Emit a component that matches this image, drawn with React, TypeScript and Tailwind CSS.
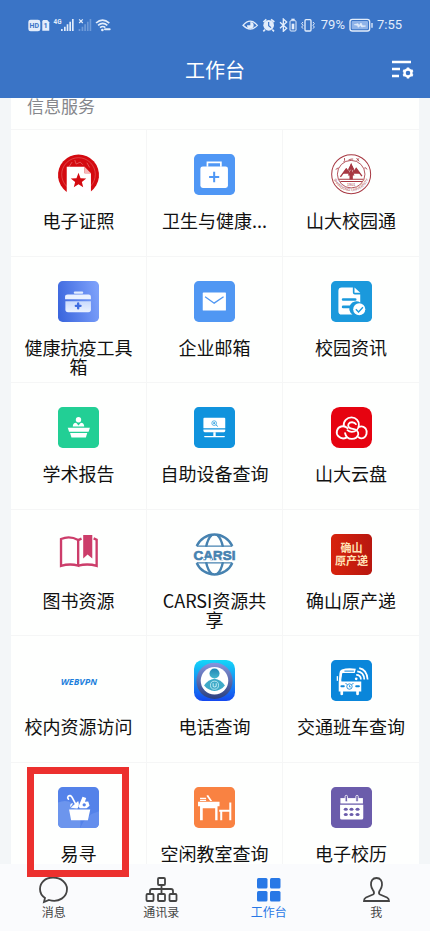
import type { ReactNode } from "react";

const CJK = "font-['Noto_Sans_CJK_SC','Noto_Sans',sans-serif]";

const Tile = ({ fill, r = 14, children }: { fill: string; r?: number; children: ReactNode }) => (
  <>
    <rect width="122" height="122" rx={r} fill={fill} />
    {children}
  </>
);

const CertificateIcon = () => (
  <>
    <path d="M25 112 A61 61 0 1 1 97 112 Z" fill="#d40a10" />
    <circle cx="61" cy="61" r="50" fill="none" stroke="#e87878" strokeWidth="1.500" />
    <path d="M30 42 L42 24 M50 18 L54 30 L66 24 L74 32 M86 26 L94 40" fill="none" stroke="#e87878" strokeWidth="2" />
    <path d="M26 38 H79 V57 H98 V122 H26 Z" fill="#fff" />
    <path d="M79 38 L98 57 H79 Z" fill="#f6b9b9" />
    <path d="M61 56 L67 72 L84 73 L71 83 L75 99 L61 90 L47 99 L51 83 L38 73 L55 72 Z" fill="#d40a10" />
  </>
);

const MedicalIcon = () => (
  <Tile fill="#4f97f5">
    <path d="M40 38 V25 H80 V38" fill="none" stroke="#fff" strokeWidth="5" />
    <rect x="19" y="37" width="82" height="64" rx="7" fill="#fff" />
    <path d="M60 53 V84 M45 68.500 H75" stroke="#4f97f5" strokeWidth="6" />
  </Tile>
);

const SealIcon = () => (
  <>
    <g fill="none" stroke="#a73842">
      <circle cx="60" cy="60" r="58" strokeWidth="3" />
      <circle cx="60" cy="60" r="41" strokeWidth="2.500" />
      <path d="M40 12 Q42 20 38 24 M52 18 Q60 14 66 15 M76 20 L84 13 M76 12 L84 22 M14 46 L22 41 M99 42 Q104 38 107 46" strokeWidth="2.500" />
      <path d="M23 75 H97 M28 82 H92" strokeWidth="3" />
      <path d="M28 68 L45 45 L52 54 L60 32 L68 54 L75 43 L92 66" strokeWidth="4" />
    </g>
    <path d="M60 28 L70 47 H50 Z M46 42 L57 59 H34 Z M75 42 L88 59 H64 Z M60 44 L70 64 H50 Z M55 62 H65 V76 H55 Z" fill="#a73842" />
    <path id="seal-arc" d="M6 66 A55 55 0 0 0 114 66" fill="none" />
    <text fontSize="11" fill="#a73842" fontFamily="Liberation Sans, sans-serif">
      <textPath href="#seal-arc" startOffset="50%" textAnchor="middle">SHANDONG UNIVERSITY</textPath>
    </text>
    <text x="60" y="94" fontSize="11" textAnchor="middle" fill="#a73842" fontFamily="Liberation Sans, sans-serif">1901</text>
  </>
);

const ToolkitIcon = () => (
  <Tile fill="url(#toolkit)">
    <defs>
      <linearGradient id="toolkit" x1="0" y1="0.600" x2="1" y2="0.400">
        <stop offset="0" stopColor="#3c67de" />
        <stop offset="1" stopColor="#7ca0fa" />
      </linearGradient>
      <linearGradient id="toolkit-bag" x1="0" y1="0" x2="0" y2="1">
        <stop offset="0" stopColor="#c9dafc" />
        <stop offset="1" stopColor="#ecf3ff" />
      </linearGradient>
    </defs>
    <rect x="47" y="31" width="28" height="7" rx="3" fill="#e3edff" />
    <path d="M21 54 V47 Q21 40 29 40 H91 Q98 40 98 47 V54 Z" fill="#eaf1ff" />
    <path d="M22 60 H98 V85 Q98 93 90 93 H30 Q22 93 22 85 Z" fill="url(#toolkit-bag)" />
    <path d="M60 67 V81 M53 74 H67" stroke="#3f6de0" strokeWidth="7" strokeLinecap="round" />
  </Tile>
);

const MailIcon = () => (
  <Tile fill="#5097f3">
    <rect x="26" y="34" width="69" height="54" rx="2" fill="#fff" />
    <path d="M33 47 L60 66 L88 47" fill="none" stroke="#5097f3" strokeWidth="4" />
  </Tile>
);

const NewsIcon = () => (
  <Tile fill="#1b99dc">
    <path d="M32 19 H65 V34 Q65 40 71 40 H87 V64 A20 20 0 0 0 64 100 H32 Q22 100 22 90 V29 Q22 19 32 19 Z" fill="#fff" />
    <path d="M70 19 L87 35 H70 Z" fill="#fff" />
    <path d="M36 55 H72 M36 77 H60" stroke="#1b99dc" strokeWidth="8" strokeLinecap="round" />
    <circle cx="84" cy="84" r="18" fill="#fff" />
    <path d="M74 84 L82 92 L95 78" fill="none" stroke="#1b99dc" strokeWidth="4" />
  </Tile>
);

const LectureIcon = () => (
  <Tile fill="#22cf95">
    <circle cx="61" cy="38" r="8" fill="#fff" />
    <path d="M44 58 Q44 48 54 47 L61 55 L68 47 Q78 48 78 58 Z" fill="#fff" />
    <path d="M29 62 H95 L91 74 H33 Z" fill="#fff" />
    <path d="M36 77 H87 L83 91 H40 Z" fill="#fff" />
  </Tile>
);

const DeviceIcon = () => (
  <Tile fill="#1093dd">
    <path d="M31 32 H90 Q93 32 93 35 V63 H28 V35 Q28 32 31 32 Z" fill="#fff" />
    <path d="M28 67 H93 V71 Q93 75 89 75 H32 Q28 75 28 71 Z" fill="#fff" />
    <path d="M61 75 V87" stroke="#fff" strokeWidth="7" />
    <path d="M32 88 H90" stroke="#fff" strokeWidth="4" strokeLinecap="round" />
    <circle cx="60" cy="48" r="7" fill="none" stroke="#1093dd" strokeWidth="2" />
    <path d="M57 48 H63 M60 45 V51 M65 53 L71 58" stroke="#1093dd" strokeWidth="2.500" />
  </Tile>
);

const CloudIcon = () => (
  <Tile fill="#e60310" r={26}>
    <g fill="none" stroke="#fff" strokeWidth="5.500" strokeLinecap="round">
      <path d="M46 91 C38 95 28 93 22 87 C13 78 17 62 30 58 C37 56 45 59 49 63" />
      <path d="M84 59 C92 56 98 59 103 64 C110 74 105 88 97 92 C92 94 86 93 82 90" />
      <path d="M38 57 C36 41 48 31 61 31 C75 31 84 42 83 54 C82 66 73 74 62 74 C56 74 52 72 49 69" />
      <path d="M74 51 C70 44 56 43 52 51 C48 60 56 64 65 65 C76 67 82 74 81 81 C79 90 71 95 62 95 C52 95 44 88 42 78" />
    </g>
  </Tile>
);

const BookIcon = () => (
  <>
    <g fill="none" stroke="#cc3d6a" strokeWidth="7">
      <path d="M60 18 Q35 4 9 15 V95 Q35 87 60 94 Z" />
      <path d="M60 94 Q90 87 115 95 V17 L106 13 M60 18 L70 14" />
    </g>
    <path d="M75 3 H102 V73 L88 61 L75 73 Z" fill="#cc3d6a" />
  </>
);

const CarsiIcon = () => (
  <>
    <g fill="none" stroke="#4682b0" strokeWidth="7">
      <path d="M8 36 A58 58 0 0 1 114 36 M8 86 A58 58 0 0 0 114 86" />
      <path d="M36 38 Q41 14 52 4 M86 38 Q81 14 70 4 M36 84 Q41 108 52 118 M86 84 Q81 108 70 118" />
      <path d="M8 36 H114 M8 86 H114" strokeWidth="4" />
    </g>
    <text x="61" y="76" fontSize="40" fontWeight="700" textAnchor="middle" fill="#4682b0" stroke="#4682b0" strokeWidth="2" fontFamily="Liberation Sans, sans-serif">CARSI</text>
    <g fill="#fff">
      <circle cx="31" cy="73" r="2.500" />
      <circle cx="51" cy="75" r="2.500" />
      <circle cx="66" cy="70" r="2.500" />
      <circle cx="84" cy="75" r="2.500" />
    </g>
  </>
);

const QueshanIcon = () => (
  <Tile fill="url(#queshan)">
    <defs>
      <linearGradient id="queshan" x1="0" y1="0" x2="1" y2="0">
        <stop offset="0" stopColor="#d7230d" />
        <stop offset="1" stopColor="#b8170f" />
      </linearGradient>
    </defs>
    <g fontSize="33" fontWeight="700" textAnchor="middle" fill="#ffe2b6" fontFamily="Noto Sans CJK SC, sans-serif">
      <text x="61" y="53">确山</text>
      <text x="61" y="93">原产递</text>
    </g>
  </Tile>
);

const WebvpnIcon = () => (
  <text x="62" y="73" fontSize="27" fontWeight="700" fontStyle="italic" textAnchor="middle" fill="#1d7fdc" fontFamily="Open Sans, sans-serif">
    WEBVPN
  </text>
);

const ContactIcon = () => (
  <Tile fill="url(#contact)" r={26}>
    <defs>
      <linearGradient id="contact" x1="0" y1="0" x2="0" y2="1">
        <stop offset="0" stopColor="#14d7f8" />
        <stop offset="1" stopColor="#1548ef" />
      </linearGradient>
      <linearGradient id="contact-ring" x1="0" y1="0" x2="0" y2="1">
        <stop offset="0" stopColor="#8795dd" />
        <stop offset="1" stopColor="#2b407f" />
      </linearGradient>
      <linearGradient id="contact-man" x1="0" y1="0" x2="0" y2="1">
        <stop offset="0" stopColor="#2385b4" />
        <stop offset="1" stopColor="#44b7cf" />
      </linearGradient>
    </defs>
    <circle cx="61" cy="62" r="54" fill="url(#contact-ring)" />
    <circle cx="61" cy="62" r="41" fill="#fff" />
    <circle cx="61" cy="40" r="15" fill="url(#contact-man)" />
    <path d="M30 76 Q42 58 61 56 Q80 58 92 76 Q80 91 61 92 Q42 91 30 76 Z" fill="#3eaac8" />
    <circle cx="61" cy="75" r="12" fill="none" stroke="#c7edf5" strokeWidth="2.500" />
    <path d="M57 69 V78 Q61 83 66 78 V69" fill="none" stroke="#c7edf5" strokeWidth="3" />
  </Tile>
);

const BusIcon = () => (
  <Tile fill="#0a86da">
    <path d="M74 26 Q50 22 32 28 Q25 31 25 40 L23 66 V94 H28 V103 Q32 107 36 103 V94 H75 V103 Q79 107 83 103 V94 H90 V64 H31 L33 41 H70" fill="#fff" />
    <path d="M34 39 H78 L84 62 H31 Z" fill="#0a86da" />
    <path d="M40 33 H68" stroke="#0a86da" strokeWidth="3" />
    <path d="M19 48 V62" stroke="#fff" strokeWidth="4" />
    <path d="M31 78 H38 M75 78 H83" stroke="#0a86da" strokeWidth="6" strokeLinecap="round" />
    <circle cx="55" cy="79" r="8" fill="none" stroke="#0a86da" strokeWidth="2.500" />
    <path d="M43 70 L48 72 M67 70 L62 72 M55 75 V80 H59" fill="none" stroke="#0a86da" strokeWidth="2.500" />
    <circle cx="75" cy="56" r="4" fill="#fff" />
    <path d="M75 44 Q89 44 89 58 M78 34 Q98 36 99 58 M84 24 Q107 28 109 58" fill="none" stroke="#fff" strokeWidth="5" />
  </Tile>
);

const BasketIcon = () => (
  <Tile fill="#5482e9">
    <path d="M0 46 Q24 36 42 48 Q72 72 66 122 H14 Q0 122 0 108 Z" fill="#6c95ed" />
    <path d="M66 122 Q82 82 122 72 V108 Q122 122 108 122 Z" fill="#648eed" />
    <path d="M33 67 H96 L89 99 H39 Z" fill="#fff" />
    <path d="M38 62 L60 42 Q65 54 58 64 Z M37 60 Q34 48 45 48" fill="#fff" />
    <path d="M53 52 L42 31 Q37 22 30 28 Q27 32 31 36" fill="none" stroke="#fff" strokeWidth="5" strokeLinecap="round" />
    <path d="M61 58 L73 29 L84 33 L80 44 L90 43 L94 56 L85 63 H65 Z" fill="#fff" />
    <circle cx="78" cy="53" r="5" fill="#5482e9" />
  </Tile>
);

const DeskIcon = () => (
  <Tile fill="#f98242">
    <path d="M12 44 H76 V57 H70 V99 H63 V63 H26 V99 H18 V57 H12 Z" fill="#fff" />
    <path d="M18 32 H36 V36 H18 Z M18 38 H36 V42 H18 Z M37 26 L42 24 L54 42 H48 Z" fill="#fff" />
    <path d="M108 46 V99 M108 71 H75 M81 71 V99" fill="none" stroke="#fff" strokeWidth="6" />
  </Tile>
);

const CalendarIcon = () => (
  <Tile fill="#6b5cab">
    <path d="M28 33 H95 V49 H28 Z" fill="#fff" />
    <path d="M27 53 H96 V92 Q96 97 91 97 H32 Q27 97 27 92 Z" fill="#fff" />
    <g fill="#6b5cab" stroke="#fff" strokeWidth="2.500">
      <rect x="42" y="25" width="7" height="19" rx="3" />
      <rect x="74" y="25" width="7" height="19" rx="3" />
    </g>
    <g fill="#6b5cab">
      {[44, 61, 79].map((cx) => (
        <g key={cx}>
          <ellipse cx={cx} cy="66" rx="6" ry="4.500" />
          <ellipse cx={cx} cy="82" rx="6" ry="4.500" />
        </g>
      ))}
    </g>
  </Tile>
);

type App = { name: string; icon: ReactNode; marked?: boolean };

const apps: App[] = [
  { name: "电子证照", icon: <CertificateIcon /> },
  { name: "卫生与健康...", icon: <MedicalIcon /> },
  { name: "山大校园通", icon: <SealIcon /> },
  { name: "健康抗疫工具箱", icon: <ToolkitIcon /> },
  { name: "企业邮箱", icon: <MailIcon /> },
  { name: "校园资讯", icon: <NewsIcon /> },
  { name: "学术报告", icon: <LectureIcon /> },
  { name: "自助设备查询", icon: <DeviceIcon /> },
  { name: "山大云盘", icon: <CloudIcon /> },
  { name: "图书资源", icon: <BookIcon /> },
  { name: "CARSI资源共享", icon: <CarsiIcon /> },
  { name: "确山原产递", icon: <QueshanIcon /> },
  { name: "校内资源访问", icon: <WebvpnIcon /> },
  { name: "电话查询", icon: <ContactIcon /> },
  { name: "交通班车查询", icon: <BusIcon /> },
  { name: "易寻", icon: <BasketIcon />, marked: true },
  { name: "空闲教室查询", icon: <DeskIcon /> },
  { name: "电子校历", icon: <CalendarIcon /> },
];

const AppCell = ({ name, icon, marked }: App) => (
  <button
    type="button"
    className="relative flex flex-col items-center gap-4 border-t border-r border-[#f5f6f6] px-3 pt-6 nth-[3n]:border-r-0"
  >
    <svg viewBox="0 0 122 122" className="size-[41px] shrink-0 overflow-visible" aria-hidden="true">
      {icon}
    </svg>
    <span className="text-center text-[18px] leading-[19px] text-[#111]">{name}</span>
    {marked && <span className="absolute top-1 left-4 z-20 h-[110px] w-[102px] border-[7px] border-[#ec302e]" />}
  </button>
);

const StatusBar = () => (
  <div className="flex h-[50px] items-center justify-between px-7 text-[#e3edfb]">
    <svg viewBox="0 0 250 42" className="h-[14px] w-[83px]" fill="none" aria-label="HD 4G">
      <rect x="1" y="5" width="36" height="35" rx="7" fill="currentColor" />
      <text x="19" y="30" fontSize="21" fontWeight="700" textAnchor="middle" fill="#3a74c6" fontFamily="Roboto, sans-serif">HD</text>
      <path d="M46 6 H58 L64 13 V38 H43 V9 Z" fill="currentColor" />
      <text x="53" y="31" fontSize="22" fontWeight="700" textAnchor="middle" fill="#3a74c6" fontFamily="Roboto, sans-serif">1</text>
      <text x="77" y="19" fontSize="19" fontWeight="700" fill="currentColor" fontFamily="Roboto, sans-serif">4G</text>
      <path d="M102 39 V33 M111 39 V26 M119 39 V19 M127 39 V11 M135 39 V3" stroke="currentColor" strokeWidth="5" />
      <path d="M154 4 L165 15 M165 4 L154 15" stroke="currentColor" strokeWidth="3.500" />
      <path d="M155 39 V33 M164 39 V26 M172 39 V19 M180 39 V11 M188 39 V3" stroke="#6f9bd9" strokeWidth="5" />
      <path d="M205 15 Q224 -3 245 15 M211 22 Q225 10 239 22 M217 29 Q225 22 233 29" stroke="currentColor" strokeWidth="5" />
      <circle cx="224" cy="36" r="4" fill="currentColor" />
      <path d="M232 34 H246" stroke="currentColor" strokeWidth="6" strokeLinecap="round" />
    </svg>
    <div className="flex items-center gap-1 font-[Roboto,sans-serif] text-[13px] leading-4">
      <svg viewBox="0 0 225 42" className="h-[14px] w-[75px]" fill="none" stroke="currentColor" aria-hidden="true">
        <path d="M3 22 Q25 -3 46 22 Q25 45 3 22 Z" strokeWidth="4" />
        <path d="M25 12 A10 10 0 1 1 15 22 L25 22 Z" fill="currentColor" stroke="none" />
        <circle cx="80" cy="22" r="16" fill="currentColor" stroke="none" />
        <path d="M64 12 L73 4 M87 4 L97 12 M69 35 L64 40 M91 35 L96 40" strokeWidth="5" />
        <path d="M80 12 V23 L87 29" stroke="#3a74c6" strokeWidth="3.500" />
        <path d="M114 13 L134 31 L124 40 V3 L134 12 L114 31" strokeWidth="4" />
        <path d="M148 4 H158" strokeWidth="4" />
        <rect x="144" y="8" width="18" height="31" rx="3" strokeWidth="3" />
        <path d="M149 17 H157 V34 H149 Z" fill="currentColor" stroke="none" />
        <rect x="189" y="5" width="18" height="34" rx="3" strokeWidth="4" />
        <path d="M183 12 L179 17 L183 22 L179 27 L183 32 M213 12 L217 17 L213 22 L217 27 L213 32" strokeWidth="3" />
      </svg>
      <span>79%</span>
      <svg viewBox="0 0 72 42" className="h-[14px] w-6" fill="none" stroke="currentColor" aria-hidden="true">
        <rect x="3" y="4" width="59" height="35" rx="7" strokeWidth="4" />
        <rect x="8" y="9" width="49" height="25" rx="3" fill="#8fb3e8" stroke="none" />
        <path d="M16 20 L27 17 L30 23 L36 15 L40 23 L50 24 L38 27 L34 22 L28 28 L25 22 Z" fill="currentColor" strokeWidth="2" />
        <path d="M69 15 V29" strokeWidth="4" />
      </svg>
      <span>7:55</span>
    </div>
  </div>
);

const Header = () => (
  <header className="relative z-10 h-[98px] bg-[#3a74c6]">
    <StatusBar />
    <div className="grid h-10 grid-cols-[1fr_auto_1fr] items-center px-4 text-white">
      <h1 className="col-start-2 text-[20px] leading-6">工作台</h1>
      <button type="button" aria-label="设置" className="justify-self-end">
        <svg viewBox="0 0 24 24" className="size-6" fill="none" stroke="currentColor" strokeWidth="2.400">
          <path d="M2 4 H21 M2 11 H10 M2 18 H9" />
          <circle cx="18" cy="15" r="3.500" />
          <path d="M18 9.500 V11 M18 19 V20.500 M13.200 12.200 L14.700 13.100 M21.300 16.900 L22.800 17.800 M13.200 17.800 L14.700 16.900 M21.300 13.100 L22.800 12.200" />
        </svg>
      </button>
    </div>
  </header>
);

const tabs = [
  {
    name: "消息",
    icon: <path d="M14 1.500 C6 1.500 1 7 1 13 C1 17 3 20 6 22 L5 26 L10 24 C20 27 28 21 28 13 C28 7 22 1.500 14 1.500 Z" />,
  },
  {
    name: "通讯录",
    icon: (
      <>
        <rect x="11" y="2" width="7" height="7" rx="1" />
        <path d="M14.500 9 V18 M3 18 V15 Q3 13 5 13 H24 Q26 13 26 15 V18" />
        <rect x="-0.500" y="18" width="7" height="7" rx="1" />
        <rect x="11" y="18" width="7" height="7" rx="1" />
        <rect x="22.500" y="18" width="7" height="7" rx="1" />
      </>
    ),
  },
  {
    name: "工作台",
    active: true,
    icon: (
      <g fill="currentColor" stroke="none">
        <rect x="3" y="2" width="10.500" height="10.500" rx="1.500" />
        <rect x="16" y="2" width="10.500" height="10.500" rx="1.500" />
        <rect x="3" y="15" width="10.500" height="10.500" rx="1.500" />
        <rect x="16" y="15" width="10.500" height="10.500" rx="1.500" />
      </g>
    ),
  },
  {
    name: "我",
    icon: <path d="M14.500 2 C10.500 2 8.700 5 9 9 C9.200 12 10.500 13.500 11.500 15 C12.200 16.500 12 18 11 18.500 L4 21.500 C2 22.500 2 24 2 25 H27 C27 24 27 22.500 25 21.500 L18 18.500 C17 18 16.800 16.500 17.500 15 C18.500 13.500 19.800 12 20 9 C20.300 5 18.500 2 14.500 2 Z" />,
  },
];

const TabBar = () => (
  <nav className="fixed inset-x-0 bottom-0 z-10 grid h-[67px] grid-cols-4 bg-[#fafbfd]">
    {tabs.map((tab) => (
      <a
        key={tab.name}
        href="#"
        aria-current={tab.active ? "page" : undefined}
        className={`flex flex-col items-center pt-3 text-[12px] leading-4 ${tab.active ? "text-[#2878e6]" : "text-[#444]"}`}
      >
        <svg viewBox="0 0 29 28" className="h-7 w-[29px] overflow-visible" fill="none" stroke="currentColor" strokeWidth="1.800" aria-hidden="true">
          {tab.icon}
        </svg>
        {tab.name}
      </a>
    ))}
  </nav>
);

export default function App() {
  return (
    <div className={`h-screen overflow-hidden bg-[#f3f6f8] ${CJK}`}>
      <Header />
      <main className="mx-[11px] bg-[#fefffe]">
        <h2 className="h-[31px] px-4 text-[17px] leading-4 text-[#85878c]">信息服务</h2>
        <div className="grid h-[759px] auto-rows-fr grid-cols-3">
          {apps.map((app) => (
            <AppCell key={app.name} {...app} />
          ))}
        </div>
      </main>
      <TabBar />
    </div>
  );
}
